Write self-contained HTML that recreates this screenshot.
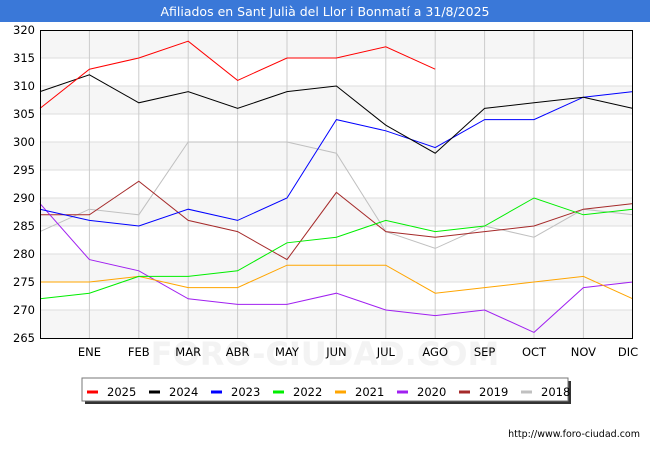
<!DOCTYPE html>
<html><head><meta charset="utf-8"><style>
body{margin:0;width:650px;height:450px;background:#fff;overflow:hidden;font-family:"DejaVu Sans","Liberation Sans",sans-serif}
</style></head><body>
<svg width="650" height="450" xmlns="http://www.w3.org/2000/svg" font-family="DejaVu Sans, Liberation Sans, sans-serif">
<rect x="0" y="0" width="650" height="22" fill="#3a78d8"/>
<text x="325" y="16" text-anchor="middle" font-size="12.5" fill="#fff">Afiliados en Sant Julià del Llor i Bonmatí a 31/8/2025</text>
<g fill="#f6f6f6">
<rect x="40" y="30" width="593" height="28"/><rect x="40" y="86" width="593" height="28"/><rect x="40" y="142" width="593" height="28"/><rect x="40" y="198" width="593" height="28"/><rect x="40" y="254" width="593" height="28"/><rect x="40" y="310" width="593" height="28"/>
</g>
<g stroke="#ddd" stroke-width="1">
<line x1="40" x2="633" y1="58" y2="58"/><line x1="40" x2="633" y1="86" y2="86"/><line x1="40" x2="633" y1="114" y2="114"/><line x1="40" x2="633" y1="142" y2="142"/><line x1="40" x2="633" y1="170" y2="170"/><line x1="40" x2="633" y1="198" y2="198"/><line x1="40" x2="633" y1="226" y2="226"/><line x1="40" x2="633" y1="254" y2="254"/><line x1="40" x2="633" y1="282" y2="282"/><line x1="40" x2="633" y1="310" y2="310"/>
</g>
<g stroke="#ccc">
<line x1="89.4" x2="89.4" y1="30" y2="338"/><line x1="138.8" x2="138.8" y1="30" y2="338"/><line x1="188.2" x2="188.2" y1="30" y2="338"/><line x1="237.6" x2="237.6" y1="30" y2="338"/><line x1="287" x2="287" y1="30" y2="338"/><line x1="336.4" x2="336.4" y1="30" y2="338"/><line x1="385.8" x2="385.8" y1="30" y2="338"/><line x1="435.2" x2="435.2" y1="30" y2="338"/><line x1="484.6" x2="484.6" y1="30" y2="338"/><line x1="534" x2="534" y1="30" y2="338"/><line x1="583.4" x2="583.4" y1="30" y2="338"/>
</g>
<text x="325" y="365" text-anchor="middle" font-size="32" fill="#f3f3f3" font-weight="bold">FORO-CIUDAD.COM</text>
<g font-size="11.5" fill="#000" text-anchor="end">
<text x="35" y="34">320</text><text x="35" y="62">315</text><text x="35" y="90">310</text><text x="35" y="118">305</text><text x="35" y="146">300</text><text x="35" y="174">295</text><text x="35" y="202">290</text><text x="35" y="230">285</text><text x="35" y="258">280</text><text x="35" y="286">275</text><text x="35" y="314">270</text><text x="35" y="342">265</text>
</g>
<g font-size="11.5" fill="#000" text-anchor="middle">
<text x="89.4" y="356">ENE</text><text x="138.8" y="356">FEB</text><text x="188.2" y="356">MAR</text><text x="237.6" y="356">ABR</text><text x="287" y="356">MAY</text><text x="336.4" y="356">JUN</text><text x="385.8" y="356">JUL</text><text x="435.2" y="356">AGO</text><text x="484.6" y="356">SEP</text><text x="534" y="356">OCT</text><text x="583.4" y="356">NOV</text><text x="628" y="356">DIC</text>
</g>
<g transform="translate(40,1822) scale(49.4,-5.6)" fill="none" stroke-width="1">
<polyline vector-effect="non-scaling-stroke" stroke="#c0c0c0" points="0,284 1,288 2,287 3,300 4,300 5,300 6,298 7,284 8,281 9,285 10,283 11,288 12,287"/>
<polyline vector-effect="non-scaling-stroke" stroke="#a52a2a" points="0,287 1,287 2,293 3,286 4,284 5,279 6,291 7,284 8,283 9,284 10,285 11,288 12,289"/>
<polyline vector-effect="non-scaling-stroke" stroke="#a020f0" points="0,289 1,279 2,277 3,272 4,271 5,271 6,273 7,270 8,269 9,270 10,266 11,274 12,275"/>
<polyline vector-effect="non-scaling-stroke" stroke="#ffa500" points="0,275 1,275 2,276 3,274 4,274 5,278 6,278 7,278 8,273 9,274 10,275 11,276 12,272"/>
<polyline vector-effect="non-scaling-stroke" stroke="#00ee00" points="0,272 1,273 2,276 3,276 4,277 5,282 6,283 7,286 8,284 9,285 10,290 11,287 12,288"/>
<polyline vector-effect="non-scaling-stroke" stroke="#0000ff" points="0,288 1,286 2,285 3,288 4,286 5,290 6,304 7,302 8,299 9,304 10,304 11,308 12,309"/>
<polyline vector-effect="non-scaling-stroke" stroke="#000" points="0,309 1,312 2,307 3,309 4,306 5,309 6,310 7,303 8,298 9,306 10,307 11,308 12,306"/>
<polyline vector-effect="non-scaling-stroke" stroke="#ff0000" points="0,306 1,313 2,315 3,318 4,311 5,315 6,315 7,317 8,313"/>
</g>
<rect x="40.5" y="30.5" width="592" height="308" fill="none" stroke="#000"/>
<rect x="85" y="381" width="486" height="23" fill="#333"/>
<rect x="82" y="378" width="486" height="23" fill="#fff" stroke="#777"/>
<g stroke-width="3">
<line x1="87" x2="98" y1="392" y2="392" stroke="#f00"/><line x1="149" x2="160" y1="392" y2="392" stroke="#000"/><line x1="211" x2="222" y1="392" y2="392" stroke="#00f"/><line x1="273" x2="284" y1="392" y2="392" stroke="#0e0"/><line x1="335" x2="346" y1="392" y2="392" stroke="#ffa500"/><line x1="397" x2="408" y1="392" y2="392" stroke="#a020f0"/><line x1="459" x2="470" y1="392" y2="392" stroke="#a52a2a"/><line x1="521" x2="532" y1="392" y2="392" stroke="#c0c0c0"/>
</g>
<g font-size="11.5" fill="#000">
<text x="107" y="396">2025</text><text x="169" y="396">2024</text><text x="231" y="396">2023</text><text x="293" y="396">2022</text><text x="355" y="396">2021</text><text x="417" y="396">2020</text><text x="479" y="396">2019</text><text x="541" y="396">2018</text>
</g>
<text x="640" y="437" text-anchor="end" font-size="9.5" fill="#000">http://www.foro-ciudad.com</text>
</svg>
</body></html>
